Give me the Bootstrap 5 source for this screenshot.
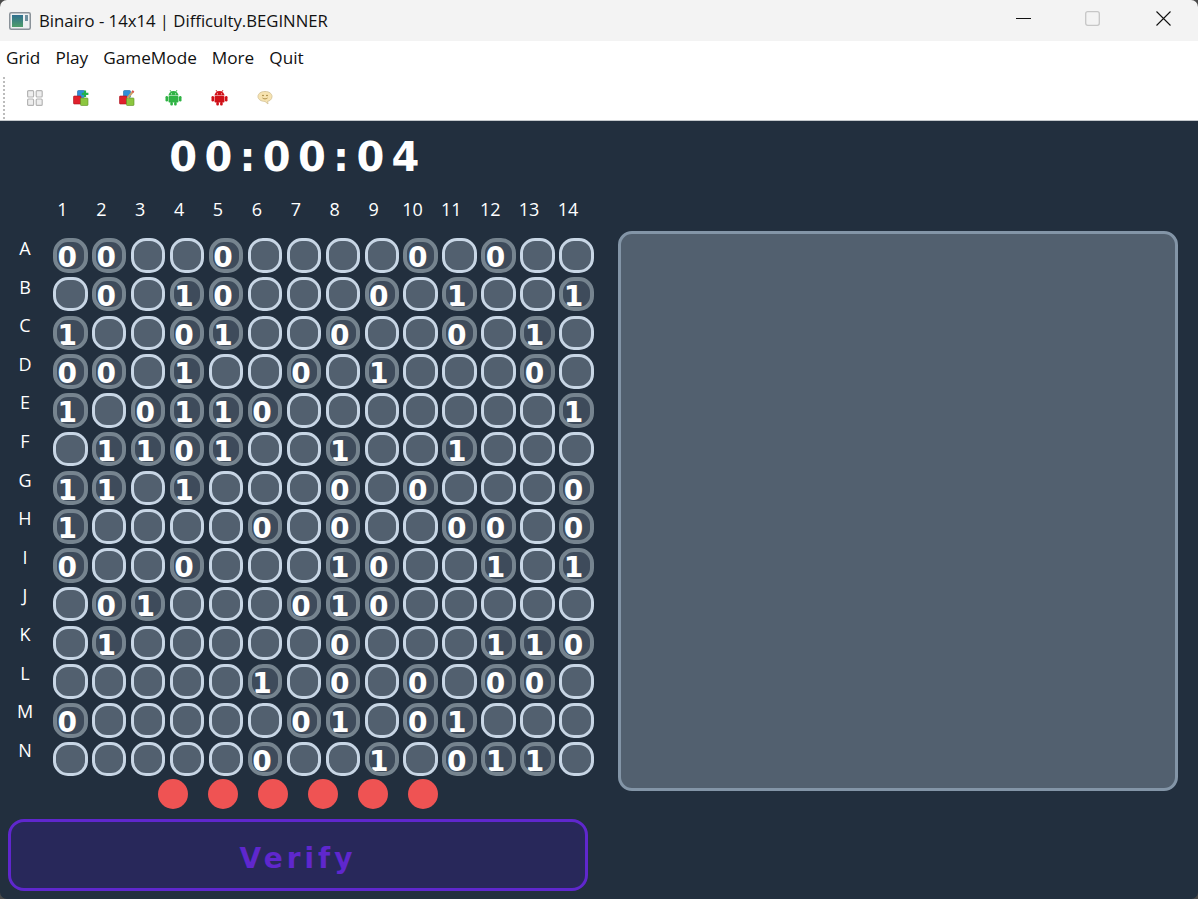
<!DOCTYPE html>
<html lang="en">
  <head>
    <meta charset="UTF-8" />
    <meta name="viewport" content="width=device-width, initial-scale=1.0" />
    <title>Binairo</title>
    <link
      href="https://cdn.jsdelivr.net/npm/bootstrap@5.3.0/dist/css/bootstrap.min.css"
      rel="stylesheet"
    />
    <style>
      html,
      body {
        height: 100%;
        overflow: hidden;
        background: #4a4a4a;
      }
      .app-window {
        width: 1198px;
        height: 899px;
        border-radius: 7px;
        overflow: hidden;
        font-family: "Open Sans", "Noto Sans", sans-serif;
      }
      .title-bar {
        height: 41px;
        background: #f3f3f3;
        color: #111;
        font-size: 16.7px;
        padding-left: 9px;
      }
      .title-text {
        margin-left: 8px;
      }
      .win-btn {
        width: 71px;
        height: 41px;
        padding: 11px 0 0 2px;
      }
      .win-btn-first {
        padding-left: 6px;
      }
      .menu-bar {
        height: 34px;
        padding-left: 6px;
        gap: 15px;
        font-size: 17.2px;
        color: #111;
        background: #fff;
      }
      .tool-bar {
        height: 46px;
        background: #fff;
        border-bottom: 1px solid #c4c8cc;
        padding-left: 3px;
      }
      .tool-grip {
        width: 2px;
        height: 42px;
        margin-right: 7px;
        border-left: 2px dotted #bcbcbc;
      }
      .tool-btn {
        width: 46px;
        height: 44px;
      }
      .game-area {
        height: 778px;
        background: #222f3e;
        color: #fff;
      }
      .left-side {
        width: 618px;
      }
      .clock {
        height: 72px;
        width: 596px;
        font-family: "DejaVu Sans", sans-serif;
        font-weight: 700;
        font-size: 40px;
        letter-spacing: 7.3px;
      }
      .col-labels {
        height: 37px;
        padding: 0 0 4px 43px;
        font-size: 18px;
      }
      .col-label {
        width: 38.9px;
        text-align: center;
      }
      .row-labels {
        width: 50px;
        margin: -1px 3px 0 0;
        font-size: 18px;
      }
      .row-label {
        height: 38.6px;
        line-height: 38.6px;
        text-align: center;
      }
      .board-grid {
        display: grid;
        grid-template-columns: repeat(14, 34.5px);
        grid-auto-rows: 34.5px;
        column-gap: 4.45px;
        row-gap: 4.27px;
        padding-top: 8px;
      }
      .cell {
        border-radius: 15px;
        border: 3px solid #c8d6e5;
        background: #52606f;
        font-family: "DejaVu Sans", sans-serif;
        font-weight: 700;
        font-size: 28px;
        line-height: 33px;
        text-align: center;
        padding-right: 6px;
        overflow: hidden;
      }
      .cell-set {
        border: 4px solid #76848f;
        background: #3e4b5b;
        line-height: 31px;
      }
      .dot-row {
        gap: 20px;
        padding-left: 158px;
        margin-top: 3px;
      }
      .red-dot {
        width: 30px;
        height: 30px;
        border-radius: 50%;
        background: #ef5353;
      }
      .verify-btn {
        width: 580px;
        height: 72px;
        margin: 10px 0 0 8px;
        padding: 12px 0 4px;
        border: 3px solid #5f27cd;
        border-radius: 16px;
        background: #28285a;
        color: #5f27cd;
        font-family: "DejaVu Sans", sans-serif;
        font-weight: 700;
        font-size: 28px;
        letter-spacing: 4px;
      }
      .verify-btn:hover {
        border-color: #5f27cd;
        background: #28285a;
        color: #5f27cd;
      }
      .side-panel {
        width: 560px;
        height: 560px;
        margin-top: 110px;
        border: 3px solid #8395a7;
        border-radius: 14px;
        background: #52606f;
      }
    </style>
  </head>
  <body>
    <div class="app-window d-flex flex-column">
      <div class="title-bar d-flex align-items-center">
        <svg width="22" height="18" viewBox="0 0 22 18">
          <defs>
            <linearGradient id="appGrad" x1="0" y1="0" x2="0" y2="1">
              <stop offset="0" stop-color="#2f6f8f" />
              <stop offset="1" stop-color="#4f9e6a" />
            </linearGradient>
          </defs>
          <rect x="0.75" y="0.75" width="20.5" height="16.5" rx="1.5" fill="#eef1f2" stroke="#8a9299" stroke-width="1.5" />
          <rect x="3" y="3" width="11" height="12" fill="url(#appGrad)" />
          <rect x="16" y="3" width="3" height="6" fill="#6f8f9f" />
        </svg>
        <span class="title-text">Binairo - 14x14 | Difficulty.BEGINNER</span>
        <div class="ms-auto d-flex">
          <div class="win-btn win-btn-first d-flex justify-content-center">
            <svg width="15" height="15" viewBox="0 0 15 15"><path d="M0 7.500h15" stroke="#111" /></svg>
          </div>
          <div class="win-btn d-flex justify-content-center">
            <svg width="15" height="15" viewBox="0 0 15 15"><rect x="0.7" y="0.7" width="13.6" height="13.600" rx="2" fill="none" stroke="#c6c6c6" stroke-width="1.3" /></svg>
          </div>
          <div class="win-btn d-flex justify-content-center">
            <svg width="15" height="15" viewBox="0 0 15 15"><path d="M0.5 0.5l14 14M14.500 0.500l-14 14" stroke="#111" stroke-width="1.1" /></svg>
          </div>
        </div>
      </div>

      <div class="menu-bar d-flex align-items-center">
        <span>Grid</span><span>Play</span><span>GameMode</span><span>More</span><span>Quit</span>
      </div>

      <div class="tool-bar d-flex align-items-center">
        <div class="tool-grip"></div>
        <div class="tool-btn d-flex align-items-center justify-content-center">
          <svg width="16" height="16" viewBox="0 0 16 16" fill="#eee" stroke="#b4b4b4" stroke-width="1.2">
            <rect x="0.6" y="0.6" width="6" height="6.4" rx="1" />
            <rect x="9.2" y="0.6" width="6" height="6.4" rx="1" />
            <rect x="0.6" y="9" width="6" height="6.4" rx="1" />
            <rect x="9.2" y="9" width="6" height="6.4" rx="1" />
          </svg>
        </div>
        <div class="tool-btn d-flex align-items-center justify-content-center">
          <svg width="16" height="16" viewBox="0 0 16 16">
            <rect x="4.500" y="0.500" width="7" height="7" rx="1" fill="#2f8fd8" stroke="#1c6aa8" stroke-width="0.6" />
            <rect x="0.500" y="6" width="7.500" height="8" rx="0.8" fill="#e0202c" stroke="#a81420" stroke-width="0.6" />
            <rect x="7.500" y="8" width="7.500" height="7.500" rx="0.8" fill="#8cc63f" stroke="#5c9024" stroke-width="0.6" />
            <path d="M12 0.500v6.500M8.800 3.800h6.600" stroke="#22b14c" stroke-width="2.200" />
          </svg>
        </div>
        <div class="tool-btn d-flex align-items-center justify-content-center">
          <svg width="16" height="16" viewBox="0 0 16 16">
            <rect x="4.500" y="0.500" width="7" height="7" rx="1" fill="#2f8fd8" stroke="#1c6aa8" stroke-width="0.6" />
            <rect x="0.500" y="6" width="7.500" height="8" rx="0.8" fill="#e0202c" stroke="#a81420" stroke-width="0.6" />
            <rect x="7.500" y="8" width="7.500" height="7.500" rx="0.8" fill="#8cc63f" stroke="#5c9024" stroke-width="0.6" />
            <path d="M8.500 8l6-7" stroke="#c9a36a" stroke-width="2" />
            <path d="M13.300 2.400l1.200-1.400" stroke="#e05050" stroke-width="2" />
          </svg>
        </div>
        <div class="tool-btn d-flex align-items-center justify-content-center">
          <svg width="17" height="17" viewBox="0 0 16 17" fill="#2fb344" stroke="#2fb344">
            <path d="M4.500 1l1.500 2.500M11.500 1l-1.500 2.500" stroke-width="0.8" />
            <path d="M3 6.500a5 4.400 0 0 1 10 0z" stroke="none" />
            <rect x="3" y="7" width="10" height="6.500" rx="1" stroke="none" />
            <rect x="0" y="7" width="2.500" height="5.500" rx="1.200" stroke="none" />
            <rect x="13.500" y="7" width="2.500" height="5.500" rx="1.200" stroke="none" />
            <rect x="4.800" y="13" width="2.600" height="3.500" rx="1" stroke="none" />
            <rect x="8.600" y="13" width="2.600" height="3.500" rx="1" stroke="none" />
            <circle cx="6" cy="4.800" r="0.6" fill="#d6f5dc" stroke="none" />
            <circle cx="10" cy="4.800" r="0.6" fill="#d6f5dc" stroke="none" />
          </svg>
        </div>
        <div class="tool-btn d-flex align-items-center justify-content-center">
          <svg width="17" height="17" viewBox="0 0 16 17" fill="#d01018" stroke="#d01018">
            <path d="M4.500 1l1.500 2.500M11.500 1l-1.500 2.500" stroke-width="0.8" />
            <path d="M3 6.500a5 4.400 0 0 1 10 0z" stroke="none" />
            <rect x="3" y="7" width="10" height="6.500" rx="1" stroke="none" />
            <rect x="0" y="7" width="2.500" height="5.500" rx="1.200" stroke="none" />
            <rect x="13.500" y="7" width="2.500" height="5.500" rx="1.200" stroke="none" />
            <rect x="4.800" y="13" width="2.600" height="3.500" rx="1" stroke="none" />
            <rect x="8.600" y="13" width="2.600" height="3.500" rx="1" stroke="none" />
            <circle cx="6" cy="4.800" r="0.6" fill="#f8c8c8" stroke="none" />
            <circle cx="10" cy="4.800" r="0.6" fill="#f8c8c8" stroke="none" />
          </svg>
        </div>
        <div class="tool-btn d-flex align-items-center justify-content-center">
          <svg width="16" height="16" viewBox="0 0 16 16">
            <path d="M8 1.500c4 0 7 2 7 5s-2.500 4.600-4.500 4.800l0.500 2.700-3-2.600C4 11.300 1 9.500 1 6.500s3-5 7-5z" fill="#f7e3b0" stroke="#d9c9a0" />
            <circle cx="6" cy="5.500" r="0.8" fill="#9a7a30" />
            <circle cx="10" cy="5.500" r="0.8" fill="#9a7a30" />
            <path d="M5.500 8c1.500 1.200 3.500 1.200 5 0" fill="none" stroke="#9a7a30" stroke-width="0.8" />
          </svg>
        </div>
      </div>

      <div class="game-area d-flex">
        <div class="left-side">
          <div class="clock d-flex align-items-center justify-content-center">00:00:04</div>
          <div class="col-labels d-flex align-items-center" id="colLabels"></div>
          <div class="d-flex">
            <div class="row-labels" id="rowLabels"></div>
            <div class="board-grid" id="board"></div>
          </div>
          <div class="dot-row d-flex">
            <div class="red-dot"></div>
            <div class="red-dot"></div>
            <div class="red-dot"></div>
            <div class="red-dot"></div>
            <div class="red-dot"></div>
            <div class="red-dot"></div>
          </div>
          <button class="btn verify-btn d-flex align-items-center justify-content-center">Verify</button>
        </div>
        <div class="side-panel"></div>
      </div>
    </div>

    <script>
      const rows = {
        A: "00..0....0.0..",
        B: ".0.10...0.1..1",
        C: "1..01..0..0.1.",
        D: "00.1..0.1...0.",
        E: "1.0110.......1",
        F: ".1101..1..1...",
        G: "11.1...0.0...0",
        H: "1....0.0..00.0",
        I: "0..0...10..1.1",
        J: ".01...010.....",
        K: ".1.....0...110",
        L: ".....1.0.0.00.",
        M: "0.....01.01...",
        N: ".....0..1.011.",
      };

      let colHtml = "";
      for (let i = 1; i <= 14; i++) {
        colHtml += `<div class="col-label">${i}</div>`;
      }
      document.getElementById("colLabels").innerHTML = colHtml;

      let rowHtml = "";
      let boardHtml = "";
      Object.keys(rows).forEach((letter) => {
        rowHtml += `<div class="row-label">${letter}</div>`;
        rows[letter].split("").forEach((v) => {
          boardHtml +=
            v === "."
              ? `<div class="cell"></div>`
              : `<div class="cell cell-set">${v}</div>`;
        });
      });
      document.getElementById("rowLabels").innerHTML = rowHtml;
      document.getElementById("board").innerHTML = boardHtml;
    </script>

    <script src="https://cdn.jsdelivr.net/npm/bootstrap@5.3.0/dist/js/bootstrap.bundle.min.js"></script>
  </body>
</html>
